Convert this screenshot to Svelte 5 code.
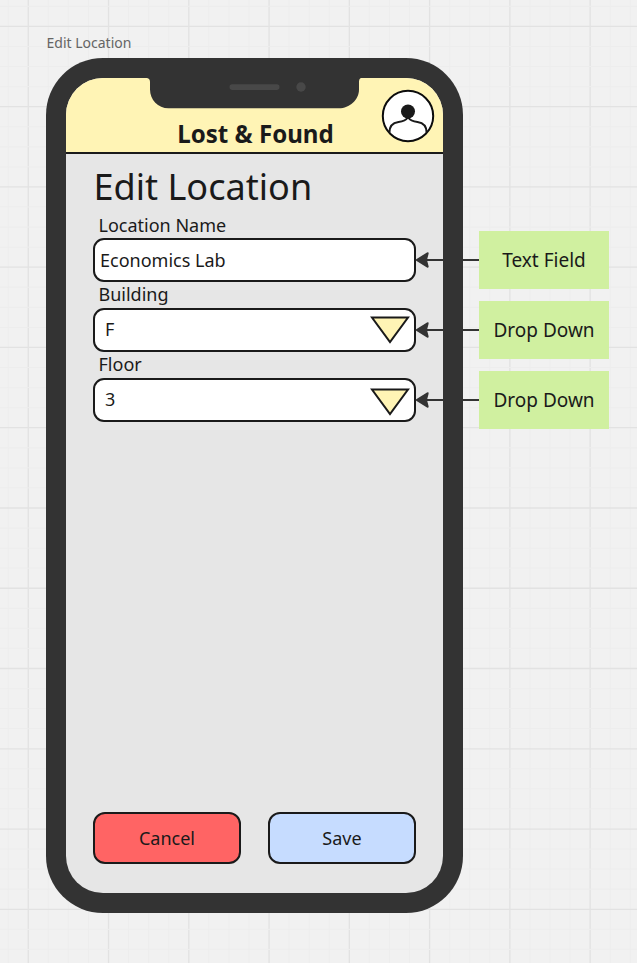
<script>
  const fields = [
    { label: 'Location Name', value: 'Economics Lab', kind: 'text', note: 'Text Field' },
    { label: 'Building', value: 'F', kind: 'select', note: 'Drop Down', drop: 6 },
    { label: 'Floor', value: '3', kind: 'select', note: 'Drop Down', drop: 8 },
  ];
  const step = 20.067;
  const cols = Array.from({ length: 32 }, (_, i) => ({ at: 8.2 + i * step, major: i % 4 === 1 }));
  const rows = Array.from({ length: 48 }, (_, i) => ({ at: 6.3 + i * step, major: i % 4 === 1 }));
</script>

<main class="board">
  <svg class="grid" width="637" height="963" aria-hidden="true">
    {#each cols as c}
      <line x1={c.at} x2={c.at} y1="0" y2="963" class:major={c.major} />
    {/each}
    {#each rows as r}
      <line x1="0" x2="637" y1={r.at} y2={r.at} class:major={r.major} />
    {/each}
  </svg>

  <section class="frame">
    <div class="caption">Edit Location</div>
    <div class="phone">
      <div class="screen">
        <header>
          <svg class="notch" width="214" height="31" viewBox="-1 0 214 31" aria-hidden="true">
            <path d="M-1 0Q2 .5 2 4V11.500C2 22 10 30.300 20.500 30.300H191C201.500 30.300 211 22 211 11.500V4Q211 .5 213 0Z" fill="#333" />
            <rect x="81.500" y="6.300" width="50" height="5.600" rx="2.800" fill="#484848" />
            <circle cx="153" cy="9" r="4.700" fill="#484848" />
          </svg>
          <h1>Lost &amp; Found</h1>
          <svg class="avatar" width="54" height="54" viewBox="0 0 54 54" aria-hidden="true">
            <circle cx="27" cy="27" r="25.200" fill="#fff" stroke="#0c0c0c" stroke-width="2" />
            <path d="M8.400 43.800C8.300 37.500 12 33.800 17.500 33C21.500 32.400 24.800 31.500 26.300 29H27.700C29.200 31.500 32.500 32.400 36.500 33C42 33.800 45.700 37.500 45.600 43.800" fill="none" stroke="#1a1a1a" stroke-width="2" />
            <circle cx="27" cy="22.500" r="7" fill="#1a1a1a" />
          </svg>
        </header>
        <div class="content">
          <h2>Edit Location</h2>
          {#each fields as f}
            <div class="field">
              <div class="label">{f.label}</div>
              <div class="box {f.kind}">
                <span>{f.value}</span>
                {#if f.kind === 'select'}
                  <svg style:margin-top="{f.drop}px" width="40" height="28" viewBox="0 0 40 28" aria-hidden="true">
                    <path d="M2 1.500H38L20 26Z" fill="#fff4b5" stroke="#1a1a1a" stroke-width="2" />
                  </svg>
                {/if}
              </div>
            </div>
          {/each}
          <div class="actions">
            <div class="button cancel">Cancel</div>
            <div class="button save">Save</div>
          </div>
        </div>
      </div>
    </div>
  </section>

  <aside>
    {#each fields as f}
      <div class="note">
        <svg class="arrow" width="64" height="18" viewBox="0 0 64 18" aria-hidden="true">
          <path d="M10 9H64" stroke="#333" stroke-width="2" />
          <path d="M0 9L12 1.500Q14 .8 13.600 2.700L12 9L13.600 15.300Q14 17.200 12 16.500Z" fill="#333" />
        </svg>
        {f.note}
      </div>
    {/each}
  </aside>
</main>

<style>
  .board {
    position: relative;
    display: flex;
    width: 637px;
    height: 963px;
    box-sizing: border-box;
    padding: 31px 0 0 46px;
    overflow: hidden;
    background: #f1f1f1;
    color: #1a1a1a;
    font-family: 'Noto Sans', sans-serif;
    font-size: 18px;
  }
  .grid {
    position: absolute;
    left: 0;
    top: 0;
  }
  .grid line { stroke: #ededed; stroke-width: 1; }
  .grid line.major { stroke: #e2e2e2; stroke-width: 1.3; }
  .frame { position: relative; width: 417px; }
  .caption {
    height: 27px;
    line-height: 24px;
    padding-left: 0.5px;
    font-size: 14px;
    color: #656565;
  }
  .phone {
    box-sizing: border-box;
    width: 417px;
    height: 855px;
    padding: 20px;
    border-radius: 57px;
    background: #333;
  }
  .screen {
    display: flex;
    flex-direction: column;
    height: 815px;
    border-radius: 37px;
    overflow: hidden;
    background: #e6e6e6;
  }
  header {
    position: relative;
    box-sizing: border-box;
    height: 76px;
    padding: 39px 0 0 2px;
    border-bottom: 2px solid #1a1a1a;
    background: #fff4b5;
    text-align: center;
  }
  .notch { position: absolute; left: 81px; top: 0; }
  .avatar { position: absolute; left: 315px; top: 11px; }
  h1 {
    margin: 0;
    font-size: 24.1px;
    line-height: 34px;
    font-weight: 700;
  }
  .content {
    flex: 1;
    display: flex;
    flex-direction: column;
    padding: 5px 27px 29px;
  }
  h2 {
    margin: 0;
    height: 53px;
    line-height: 54px;
    font-size: 36.1px;
    font-weight: 400;
    text-indent: 0.5px;
  }
  .field { height: 70px; }
  .label {
    height: 26px;
    line-height: 26px;
    padding-left: 5.5px;
  }
  .field + .field .label { line-height: 24px; }
  .box {
    display: flex;
    justify-content: space-between;
    box-sizing: border-box;
    height: 44px;
    padding: 0 4px 0 5px;
    border: 2px solid #1a1a1a;
    border-radius: 11px;
    background: #fff;
    line-height: 40px;
  }
  .select { padding-left: 10px; line-height: 38px; }
  .actions {
    display: flex;
    gap: 27px;
    margin-top: auto;
  }
  .button {
    flex: 1;
    box-sizing: border-box;
    height: 52px;
    line-height: 48px;
    border: 2px solid #1a1a1a;
    border-radius: 12px;
    text-align: center;
  }
  .cancel { background: #ff6464; }
  .save { background: #c6dcff; }
  aside {
    display: flex;
    flex-direction: column;
    gap: 12px;
    margin: 200px 0 0 16px;
  }
  .note {
    position: relative;
    width: 130px;
    height: 58px;
    line-height: 58px;
    background: #d0f0a0;
    text-align: center;
    font-size: 19px;
  }
  .arrow {
    position: absolute;
    left: -64px;
    top: 20px;
    overflow: visible;
  }
</style>
